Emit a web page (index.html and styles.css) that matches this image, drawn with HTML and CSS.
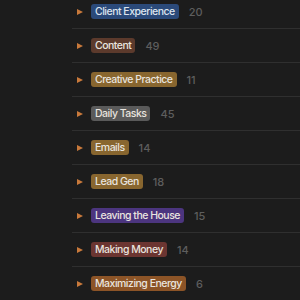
FILE: index.html
```html
<!DOCTYPE html>
<html lang="en">
<head>
    <meta charset="UTF-8">
    <meta name="viewport" content="width=device-width, initial-scale=1.0">
    <title>Groups</title>
    <link rel="stylesheet" href="styles.css">
</head>
<body>
    <div class="groups">
        <div class="group"><span class="toggle"></span><span class="tag blue">Client Experience</span><span class="count">20</span></div>
        <div class="group"><span class="toggle"></span><span class="tag brown">Content</span><span class="count">49</span></div>
        <div class="group"><span class="toggle"></span><span class="tag gold">Creative Practice</span><span class="count">11</span></div>
        <div class="group"><span class="toggle"></span><span class="tag gray">Daily Tasks</span><span class="count">45</span></div>
        <div class="group"><span class="toggle"></span><span class="tag gold">Emails</span><span class="count">14</span></div>
        <div class="group"><span class="toggle"></span><span class="tag gold">Lead Gen</span><span class="count">18</span></div>
        <div class="group"><span class="toggle"></span><span class="tag purple">Leaving the House</span><span class="count">15</span></div>
        <div class="group"><span class="toggle"></span><span class="tag red">Making Money</span><span class="count">14</span></div>
        <div class="group"><span class="toggle"></span><span class="tag orange">Maximizing Energy</span><span class="count">6</span></div>
    </div>
</body>
</html>
```

FILE: styles.css
```css
html, body {
    margin: 0;
    background-color: #1c1c1c;
    font-family: Inter, "Noto Sans", sans-serif;
    overflow: hidden;
}

.groups {
    margin-top: -5px;
    margin-left: 72px;
}

.group {
    display: flex;
    align-items: center;
    height: 33px;
    border-bottom: 1px solid #2f2f2f;
}

.toggle {
    width: 0;
    height: 0;
    margin-left: 5px;
    border-top: 3.5px solid transparent;
    border-bottom: 3.5px solid transparent;
    border-left: 6px solid #c8793b;
}

.tag {
    margin-left: 8px;
    padding: 0 4px;
    height: 15px;
    line-height: 15px;
    border-radius: 3px;
    font-size: 10.5px;
    font-weight: 500;
    letter-spacing: -0.5px;
    color: #e9e4df;
    white-space: nowrap;
}

.count {
    margin-left: 10px;
    font-size: 11px;
    font-weight: 500;
    color: #5e5e5e;
}

.blue { background-color: #2b4a7a; color: #dde5ef; }
.brown { background-color: #5c3a2c; }
.gold { background-color: #88662f; }
.gray { background-color: #5a5a5a; }
.purple { background-color: #4c357f; }
.red { background-color: #6b3531; }
.orange { background-color: #8c5427; }
```
